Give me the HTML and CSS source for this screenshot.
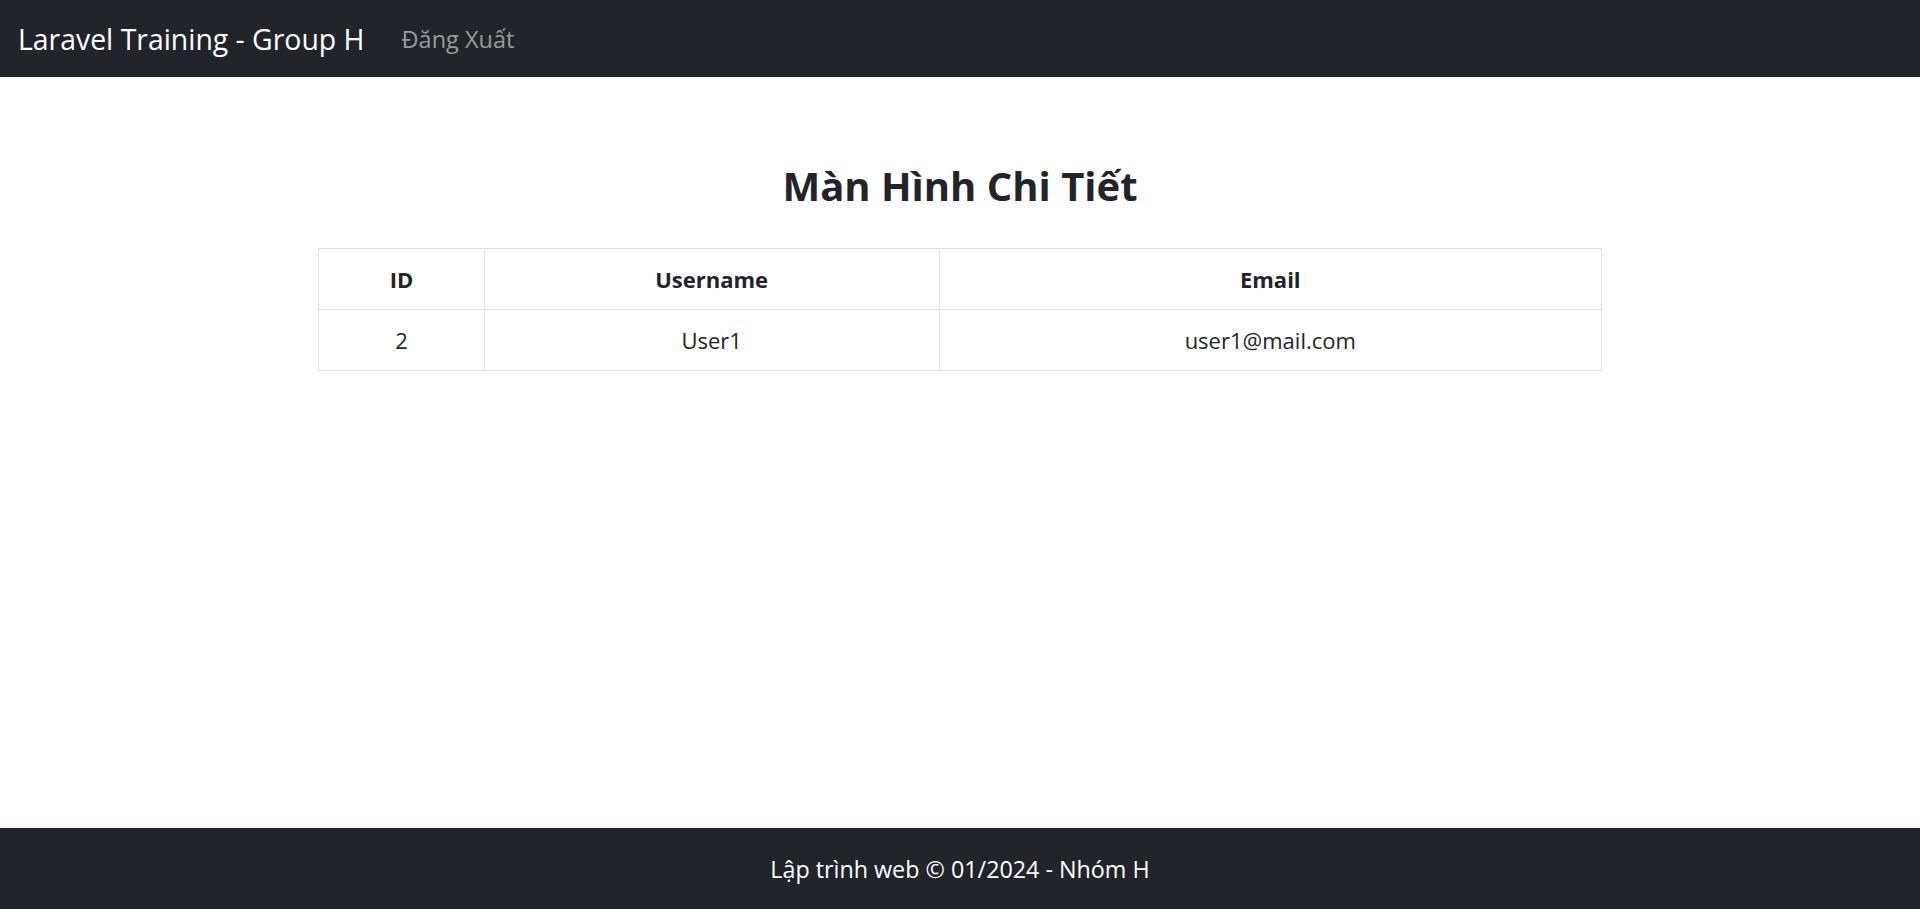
FILE: index.html
```html
<!DOCTYPE html>
<html lang="vi">
<head>
<meta charset="utf-8">
<title>Màn Hình Chi Tiết</title>
<link rel="stylesheet" href="styles.css">
</head>
<body>
<nav class="navbar">
  <a class="brand" href="#">Laravel Training - Group H</a>
  <a class="nav-link" href="#">Đăng Xuất</a>
</nav>
<main class="content">
  <h1 class="title">Màn Hình Chi Tiết</h1>
  <table class="detail">
    <colgroup>
      <col class="c1"><col class="c2"><col class="c3">
    </colgroup>
    <thead>
      <tr><th>ID</th><th>Username</th><th>Email</th></tr>
    </thead>
    <tbody>
      <tr><td>2</td><td>User1</td><td>user1@mail.com</td></tr>
    </tbody>
  </table>
</main>
<footer class="footer">Lập trình web © 01/2024 - Nhóm H</footer>
</body>
</html>
```

FILE: styles.css
```css
* { box-sizing: border-box; }
html, body { margin: 0; padding: 0; }
body {
  font-family: "Open Sans", "Noto Sans", sans-serif;
  color: #212529;
  background: #fff;
  min-height: 100vh;
  display: flex;
  flex-direction: column;
}
.navbar {
  height: 77px;
  background: #212529;
  display: flex;
  align-items: center;
  padding: 0 18px;
  gap: 37px;
}
.brand {
  color: #fff;
  text-decoration: none;
  font-size: 28.4px;
}
.nav-link {
  color: rgba(255,255,255,0.55);
  text-decoration: none;
  font-size: 23.5px;
}
.content {
  flex: 1;
  display: flex;
  flex-direction: column;
  align-items: center;
  padding-top: 85px;
}
.title {
  margin: 0 0 38px;
  font-size: 40px;
  font-weight: 700;
  line-height: 1.2;
}
.detail {
  width: 1284px;
  border-collapse: collapse;
  font-size: 22px;
}
.c1 { width: 166px; }
.c2 { width: 455px; }
.c3 { width: 663px; }
.detail th, .detail td {
  border: 1px solid #dee2e6;
  height: 61px;
  text-align: center;
  vertical-align: middle;
  padding: 0 10px;
}
.detail th { font-weight: 700; }
.detail td { font-weight: 400; }
.footer {
  height: 81px;
  background: #212529;
  color: #fff;
  display: flex;
  align-items: center;
  justify-content: center;
  font-size: 23.3px;
}
```
